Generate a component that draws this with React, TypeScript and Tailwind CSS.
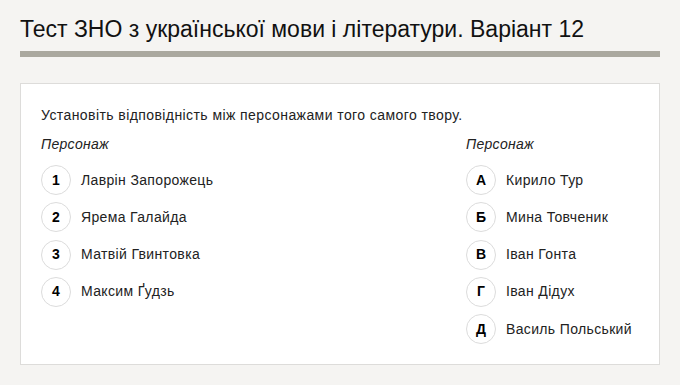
import React from 'react';

const left = [
  { key: '1', name: 'Лаврін Запорожець' },
  { key: '2', name: 'Ярема Галайда' },
  { key: '3', name: 'Матвій Гвинтовка' },
  { key: '4', name: 'Максим Ґудзь' },
];

const right = [
  { key: 'А', name: 'Кирило Тур' },
  { key: 'Б', name: 'Мина Товченик' },
  { key: 'В', name: 'Іван Гонта' },
  { key: 'Г', name: 'Іван Дідух' },
  { key: 'Д', name: 'Василь Польський' },
];

function Column({ title, items }: { title: string; items: { key: string; name: string }[] }) {
  return (
    <div className="flex flex-col">
      <div className="italic text-[14px] tracking-[0.3px] leading-5 text-[#222]">{title}</div>
      <div className="mt-[11px] flex flex-col gap-[7.25px]">
        {items.map(item => (
          <div key={item.key} className="flex items-center h-[30px]">
            <span className="w-[30px] h-[30px] rounded-full border border-[#dcdcdc] bg-white flex items-center justify-center font-bold text-[14px] text-black">
              {item.key}
            </span>
            <span className="ml-[10px] text-[14px] tracking-[0.35px] text-[#222]">{item.name}</span>
          </div>
        ))}
      </div>
    </div>
  );
}

export default function App() {
  return (
    <div className="min-h-[385px] bg-[#f5f4f2] px-5 pt-[14px] pb-5 font-['Liberation_Sans',Arial,sans-serif]">
      {/* Header */}
      <h1 className="text-[23px] leading-[30px] text-[#111]">
        Тест ЗНО з української мови і літератури. Варіант 12
      </h1>
      <div className="mt-[7px] h-[6px] bg-[#aaa89f]" />

      {/* Question card */}
      <div className="mt-[26px] bg-white border border-[#dddcda] px-5 pt-[21px] pb-5">
        <p className="text-[14px] tracking-[0.42px] leading-5 text-[#222]">
          Установіть відповідність між персонажами того самого твору.
        </p>
        <div className="mt-[9px] flex">
          <div className="flex-1">
            <Column title="Персонаж" items={left} />
          </div>
          <div className="w-[173px]">
            <Column title="Персонаж" items={right} />
          </div>
        </div>
      </div>
    </div>
  );
}
